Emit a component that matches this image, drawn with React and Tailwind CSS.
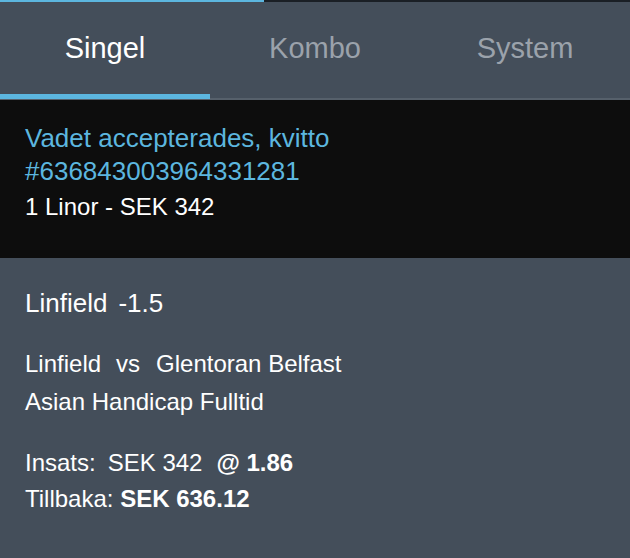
import React from "react";

const tabs = ["Singel", "Kombo", "System"];

const App = () => {
  const active = 0;

  return (
    <div
      className="h-[558px] w-[630px] flex flex-col bg-[#444e5a] text-white overflow-hidden"
      style={{ fontFamily: '"Liberation Sans", Arial, sans-serif' }}
    >
      {/* top progress strip */}
      <div className="h-[2px] flex bg-[#1a1f25]">
        <div className="w-[264px] bg-[#5cb6df]" />
      </div>

      {/* Tabs */}
      <div className="relative h-[98px] flex border-b-2 border-[#56606b]">
        {tabs.map((t, i) => (
          <div
            key={t}
            className={`relative flex-1 flex items-center justify-center pb-[2px] text-[29px] ${
              i === active ? "text-white" : "text-[#9ba2ab]"
            }`}
          >
            {t}
            {i === active && (
              <div className="absolute left-0 right-0 -bottom-[1px] h-[5px] bg-[#5cb6df]" />
            )}
          </div>
        ))}
      </div>

      {/* Receipt banner */}
      <div className="bg-[#0d0d0d] pl-[25px] pt-[22px] pb-[34px]">
        <p className="text-[26px] leading-[33px] text-[#5cb6df]">
          Vadet accepterades, kvitto
          <br />
          #636843003964331281
        </p>
        <p className="text-[24px] leading-[34px] mt-[2px]">1 Linor - SEK 342</p>
      </div>

      {/* Bet details */}
      <div className="flex-1 pl-[25px] pt-[29px]">
        <p className="text-[26px] leading-[32px]">
          Linfield<span className="ml-[11px]">-1.5</span>
        </p>
        <div className="mt-[26px] text-[24px] leading-[38px]">
          <p>
            Linfield<span className="ml-[15px] mr-[16px]">vs</span>Glentoran Belfast
          </p>
          <p>Asian Handicap Fulltid</p>
        </div>
        <div className="mt-[24px] text-[24px] leading-[36px]">
          <p>
            Insats:<span className="ml-[12px]">SEK 342</span>
            <span className="ml-[14px] font-bold">@ 1.86</span>
          </p>
          <p>
            Tillbaka: <span className="font-bold">SEK 636.12</span>
          </p>
        </div>
      </div>
    </div>
  );
};

export default App;
